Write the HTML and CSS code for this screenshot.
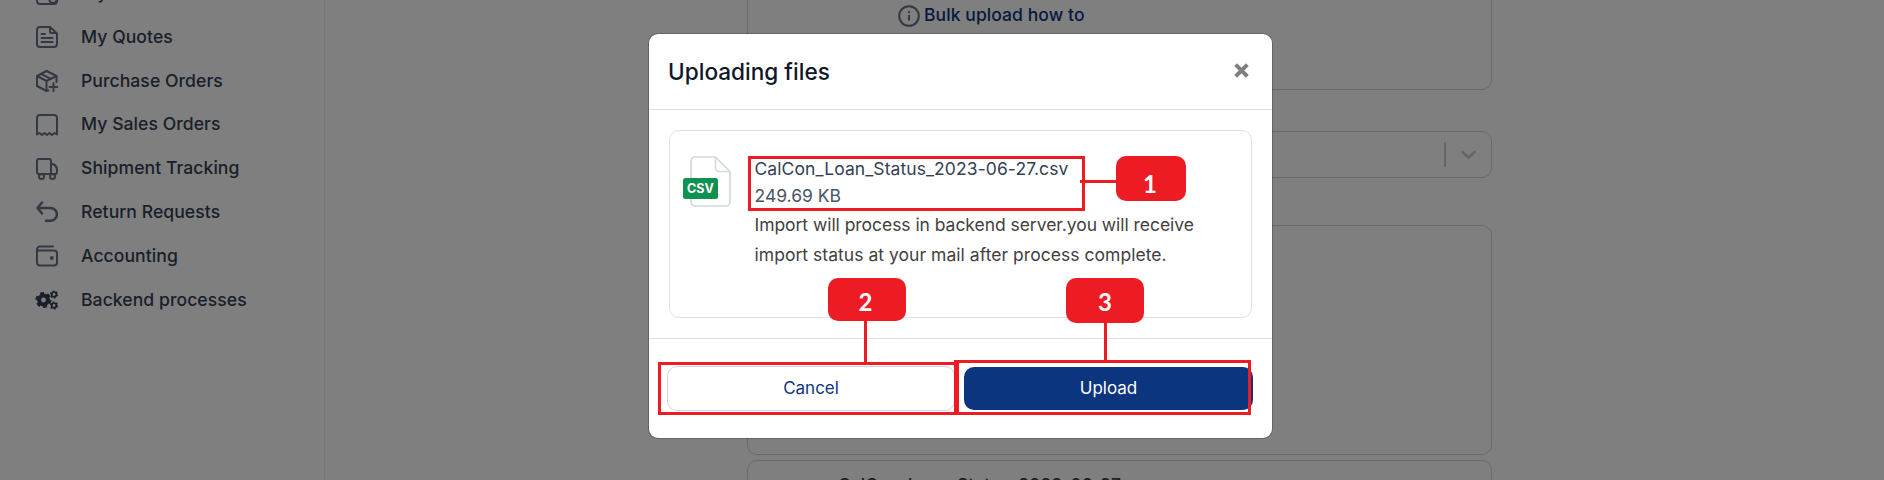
FILE: index.html
```
<!DOCTYPE html>
<html lang="en">
<head>
<meta charset="utf-8">
<title>Uploading files</title>
<link rel="stylesheet" href="styles.css">
</head>
<body>
<div class="app">
  <nav class="sidebar">
    <a class="nav-item"><svg class="icon" viewBox="0 0 22 22"><rect x="1" y="1" width="20" height="20" rx="3"/><circle cx="17" cy="16.500" r="3.600"/></svg><span>My Orders</span></a>
    <a class="nav-item"><svg class="icon" viewBox="0 0 22 22"><path d="M4 1H14L21 7.500V18a3 3 0 0 1-3 3H4a3 3 0 0 1-3-3V4a3 3 0 0 1 3-3Z"/><path d="M14 1V5.500a1.500 1.500 0 0 0 1.500 1.500H20M5.500 8H9M5.500 12H16.500M5.500 16H16.500"/></svg><span>My Quotes</span></a>
    <a class="nav-item"><svg class="icon" viewBox="0 0 22 22"><path d="M12.500 20.500 10.500 21 1 16V6L10.500 1 20.500 6V12M1 6 10.500 11 20.500 6M10.500 11V21M5 3.800 14.800 8.800M17.500 13V21M13.500 17H21.500"/></svg><span>Purchase Orders</span></a>
    <a class="nav-item"><svg class="icon" viewBox="0 0 22 22"><path d="M1 20.500V4a3 3 0 0 1 3-3H18a3 3 0 0 1 3 3V20.500L18.500 19 16 21 13.500 19 11 21 8.500 19 6 21 3.500 19Z"/></svg><span>My Sales Orders</span></a>
    <a class="nav-item"><svg class="icon" viewBox="0 0 22 22"><path d="M3 16A2 2 0 0 1 1 14V3a2 2 0 0 1 2-2H13a2 2 0 0 1 2 2V15.500M15 6H17Q21 8 21 12V14Q21 16 19 16H3"/><circle cx="5.500" cy="18.500" r="2.500"/><circle cx="16.500" cy="18.500" r="2.500"/></svg><span>Shipment Tracking</span></a>
    <a class="nav-item"><svg class="icon icon-bold" viewBox="0 0 22 22"><path d="M6 1.500 1.500 7 6 12.500M1.500 7H14.500a6.300 6.300 0 0 1 0 12.800H10"/></svg><span>Return Requests</span></a>
    <a class="nav-item"><svg class="icon" viewBox="0 0 22 22"><path d="M17 1.500H4A3 3 0 0 0 1 4.500V17.500a3 3 0 0 0 3 3H18a3 3 0 0 0 3-3V8.500a3 3 0 0 0-3-3H1"/><circle cx="15.800" cy="13" r=".9"/></svg><span>Accounting</span></a>
    <a class="nav-item"><svg class="icon gears" viewBox="0 0 22 22"><circle class="hub" cx="7.500" cy="11" r="4.400"/><circle class="teeth" cx="7.500" cy="11" r="6.700"/><circle class="small-hub" cx="18" cy="5.500" r="2.300"/><circle class="small-teeth" cx="18" cy="5.500" r="3.400"/><circle class="small-hub" cx="18" cy="16.500" r="2.300"/><circle class="small-teeth" cx="18" cy="16.500" r="3.400"/></svg><span>Backend processes</span></a>
  </nav>
  <main class="content">
    <section class="panel panel-help"><svg class="info" viewBox="0 0 22 22"><circle cx="11" cy="11" r="9.800"/><path d="M11 10V15.500M11 6V8"/></svg><span class="help-text">Bulk upload how to</span></section>
    <section class="panel panel-select"><span class="divider"></span><svg class="chevron" viewBox="0 0 16 10"><path d="M2 2 8 7.500 14 2"/></svg></section>
    <section class="panel panel-drop"></section>
    <section class="panel panel-file"><span class="queued-name">CalCon_Loan_Status_2023-06-27</span></section>
  </main>
</div>

<div class="backdrop">
  <div class="modal">
    <header class="modal-header">
      <h1 class="title">Uploading files</h1>
      <svg class="close" viewBox="0 0 16 16"><path d="M2.500 2.500 13.500 13.500M13.500 2.500 2.500 13.500"/></svg>
    </header>
    <div class="modal-body">
      <div class="file-card">
        <div class="file-icon">
          <svg class="page-icon" viewBox="0 0 41 51"><path d="M5 1H25.500L40 15.500V46a4 4 0 0 1-4 4H5a4 4 0 0 1-4-4V5a4 4 0 0 1 4-4Z"/><path d="M25.500 1V11.500a4 4 0 0 0 4 4H40"/></svg>
          <span class="file-type">CSV</span>
        </div>
        <div class="file-info">
          <div class="file-name">CalCon_Loan_Status_2023-06-27.csv</div>
          <div class="file-size">249.69 KB</div>
          <p class="note"><span class="tight">Import will process in backend server.you will receive</span><br>import status at your mail after process complete.</p>
        </div>
      </div>
    </div>
    <footer class="modal-footer">
      <button class="btn btn-cancel"><span>Cancel</span></button>
      <button class="btn btn-upload"><span>Upload</span></button>
    </footer>
  </div>
</div>

<div class="callouts">
  <div class="frame frame-file"></div>
  <div class="frame frame-cancel"></div>
  <div class="frame frame-upload"></div>
  <div class="line line-1"></div>
  <div class="line line-2"></div>
  <div class="line line-3"></div>
  <div class="badge badge-1">1</div>
  <div class="badge badge-2">2</div>
  <div class="badge badge-3">3</div>
</div>
</body>
</html>
```

FILE: styles.css
```
* { box-sizing: border-box; }
body {
  margin: 0;
  width: 1884px;
  height: 480px;
  overflow: hidden;
  position: relative;
  background: #fff;
  font-family: Inter, "Liberation Sans", sans-serif;
}
.app { display: flex; height: 480px; overflow: hidden; }
.sidebar {
  width: 325px;
  flex: none;
  border-right: 1px solid #eaecf0;
  padding-left: 36px;
}
.nav-item {
  display: flex;
  align-items: center;
  gap: 23px;
  height: 43.8px;
  font-size: 17.6px;
  letter-spacing: .05px;
  font-weight: 500;
  color: #344054;
  white-space: nowrap;
}
.nav-item:first-child { margin-top: -28.4px; }
.icon {
  width: 22px;
  height: 22px;
  flex: none;
  fill: none;
  stroke: #667085;
  stroke-width: 2;
  stroke-linecap: round;
  stroke-linejoin: round;
}
.icon-bold { stroke-width: 2.5; }
.nav-item span { position: relative; top: -1px; }
.gears { stroke: #344054; stroke-linecap: butt; overflow: visible; }
.hub { stroke-width: 4; }
.teeth { stroke-width: 2.6; stroke-dasharray: 3.8 3.217; }
.small-hub { stroke-width: 1.8; }
.small-teeth { stroke-width: 1.4; stroke-dasharray: 1.8 1.76; }
.content { padding-left: 422px; }
.panel { width: 745px; border: 1px solid #d0d5dd; border-radius: 10px; }
.panel-help {
  height: 110px;
  margin-top: -20px;
  padding: 23.5px 0 0 150px;
  display: flex;
  align-items: flex-start;
  gap: 4px;
}
.info { width: 22px; height: 22px; fill: none; stroke: #667085; stroke-width: 2; }
.help-text { font-size: 17.5px; letter-spacing: .08px; line-height: 20px; font-weight: 500; color: #0c3580; }
.panel-select {
  height: 47px;
  margin-top: 41px;
  padding-right: 14px;
  display: flex;
  align-items: center;
  justify-content: flex-end;
  gap: 14px;
}
.divider { width: 2px; height: 25px; background: #ccc; }
.chevron { width: 17px; height: 10px; fill: none; stroke: #ccc; stroke-width: 2.8; stroke-linecap: round; }
.panel-drop { height: 230px; margin-top: 47px; }
.panel-file { height: 80px; margin-top: 5px; padding: 13px 0 0 90px; }
.queued-name { font-size: 17.5px; line-height: 22px; font-weight: 500; color: #344054; }

.backdrop { position: absolute; inset: 0; background: rgba(0, 0, 0, .5); }
.modal {
  width: 625px;
  height: 406px;
  margin: 33px 0 0 648px;
  display: flex;
  flex-direction: column;
  background: #fff;
  background-clip: padding-box;
  border: 1px solid rgba(0, 0, 0, .2);
  border-radius: 10px;
}
.modal-header {
  height: 76px;
  display: flex;
  align-items: center;
  justify-content: space-between;
  padding: 0 22px 0 19px;
  border-bottom: 1px solid #dee2e6;
}
.title { margin: 0; font-size: 22.6px; line-height: 28px; font-weight: 500; color: #101828; }
.close { width: 17px; height: 17px; margin-top: -2px; fill: none; stroke: #7f7f7f; stroke-width: 3.8; }
.modal-body { height: 228px; padding: 20px 20px 20px 20px; }
.file-card {
  height: 188px;
  display: flex;
  padding: 25px 13px;
  gap: 23.5px;
  border: 1px solid #e0e2ea;
  border-radius: 10px;
}
.file-icon { display: flex; align-items: flex-start; width: 48px; height: 51px; padding-left: 7px; position: relative; }
.page-icon { width: 41px; height: 51px; fill: none; stroke: #d3d8e1; stroke-width: 1.7; }
.file-type {
  position: absolute;
  left: 0;
  top: 22px;
  width: 35px;
  height: 21px;
  border-radius: 2.5px;
  background: #0f9150;
  color: #fff;
  font-size: 12.5px;
  font-weight: 700;
  line-height: 21px;
  text-align: center;
}
.file-info { white-space: nowrap; }
.file-name { font-size: 17.5px; letter-spacing: .09px; line-height: 26px; color: #344054; }
.file-size { font-size: 17.5px; line-height: 28px; color: #475467; }
.note { margin: 0; font-size: 17.5px; letter-spacing: .04px; line-height: 30px; color: #414141; }
.tight { letter-spacing: -.045px; }
.modal-footer {
  flex: 1;
  display: flex;
  align-items: flex-start;
  gap: 9px;
  padding: 27px 0 0 18px;
  border-top: 1px solid #dee2e6;
}
.btn {
  width: 289px;
  height: 45px;
  padding: 0;
  border-radius: 10px;
  font: 400 17px/22px Inter, sans-serif;
}
.btn-cancel { width: 288px; background: #fff; border: 1px solid #d0d5dd; color: #0c3580; }
.btn-upload { height: 43px; margin-top: 1px; background: #0c3580; border: 0; color: #fff; }
.btn span { position: relative; top: -.5px; }

.frame, .line, .badge { position: absolute; }
.frame { border: 3px solid #ed1c24; }
.frame-file { left: 748px; top: 156px; width: 337px; height: 55px; }
.frame-cancel { left: 658px; top: 362px; width: 301px; height: 53px; }
.frame-upload { left: 954px; top: 360px; width: 297px; height: 55px; }
.line, .badge { background: #ed1c24; }
.line-1 { left: 1080px; top: 180px; width: 37px; height: 3px; }
.line-2 { left: 864px; top: 320px; width: 3px; height: 43px; }
.line-3 { left: 1104px; top: 321px; width: 3px; height: 40px; }
.badge {
  width: 78px;
  height: 43px;
  border-radius: 10px;
  color: #fff;
  font: 700 24px/30px Lato, sans-serif;
  text-align: center;
  padding-top: 9px;
}
.badge-1 { left: 1116px; top: 156px; width: 70px; height: 45px; padding-top: 13px; padding-right: 2px; }
.badge-2 { left: 828px; top: 278px; padding-right: 3px; }
.badge-3 { left: 1066px; top: 278px; height: 45px; }
```
